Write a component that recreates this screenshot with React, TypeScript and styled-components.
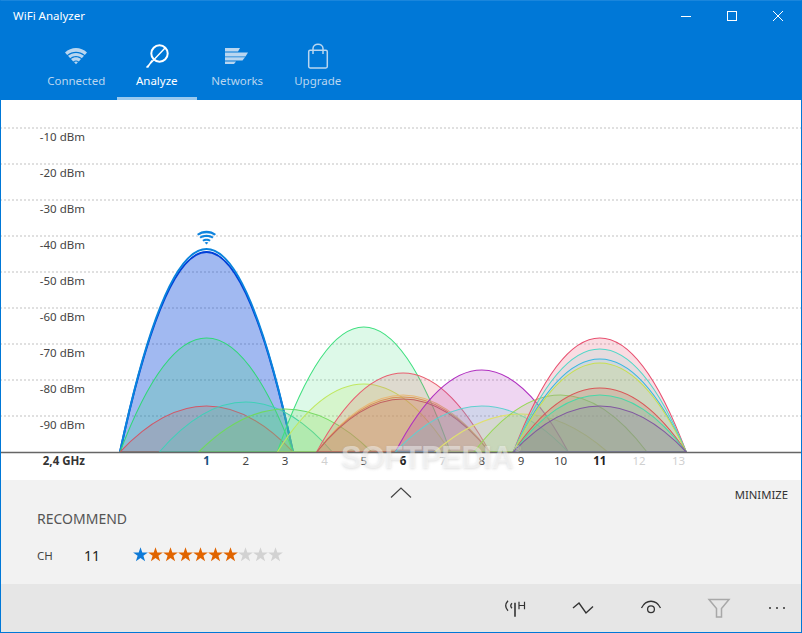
import * as React from "react";
import styled, { createGlobalStyle } from "styled-components";

const FONT = `"Noto Sans", "Open Sans", "Liberation Sans", sans-serif`;

const BASE_Y = 352;
const CHANNEL_STEP = 39.33;
const HALF_WIDTH = 86.5;

const channelX = (ch: number) => 206.5 + (ch - 1) * CHANNEL_STEP;

interface TCurve {
  ch: number;
  top: number;
  color: string;
  fill?: number;
  width?: number;
}

// top is given in page pixels, chart starts at y=100
const CURVES: TCurve[] = [
  { ch: 1, top: 252, color: "#0040d8", fill: 0.37, width: 2 },
  { ch: 1, top: 249, color: "#0a84dc", fill: 0, width: 2 },
  { ch: 1, top: 338, color: "#30d878", fill: 0.2 },
  { ch: 1, top: 406, color: "#d05868", fill: 0.2 },
  { ch: 2, top: 402, color: "#40d0b8", fill: 0.18 },
  { ch: 3, top: 409, color: "#70d860", fill: 0.2 },
  { ch: 5, top: 327, color: "#40e080", fill: 0.18 },
  { ch: 5, top: 384, color: "#c0e860", fill: 0.2 },
  { ch: 6, top: 373, color: "#e86070", fill: 0.2 },
  { ch: 6, top: 395, color: "#e8b878", fill: 0.2 },
  { ch: 6, top: 397, color: "#d89058", fill: 0.16 },
  { ch: 6, top: 399, color: "#c06060", fill: 0.16 },
  { ch: 8, top: 370, color: "#b030c0", fill: 0.2 },
  { ch: 8, top: 406, color: "#60d0d0", fill: 0.2 },
  { ch: 9, top: 414, color: "#e0e070", fill: 0.2 },
  { ch: 10, top: 395, color: "#98d858", fill: 0.2 },
  { ch: 11, top: 338, color: "#e85070", fill: 0.2 },
  { ch: 11, top: 349, color: "#50d8c8", fill: 0.12 },
  { ch: 11, top: 359, color: "#38b8e0", fill: 0.12 },
  { ch: 11, top: 363, color: "#c8e050", fill: 0.2 },
  { ch: 11, top: 388, color: "#d85858", fill: 0.2 },
  { ch: 11, top: 395, color: "#48d8a8", fill: 0.2 },
  { ch: 11, top: 406, color: "#8058a0", fill: 0.16 },
];

const LEVELS = [-10, -20, -30, -40, -50, -60, -70, -80, -90];

// 0 dim, 1 normal, 2 current, 3 connected
const CHANNELS: { n: number; tone: number }[] = [
  { n: 1, tone: 3 },
  { n: 2, tone: 1 },
  { n: 3, tone: 1 },
  { n: 4, tone: 0 },
  { n: 5, tone: 1 },
  { n: 6, tone: 2 },
  { n: 7, tone: 0 },
  { n: 8, tone: 1 },
  { n: 9, tone: 1 },
  { n: 10, tone: 1 },
  { n: 11, tone: 2 },
  { n: 12, tone: 0 },
  { n: 13, tone: 0 },
];

const TONE_COLOR = ["#d0d0d0", "#444444", "#222222", "#14507e"];

const GlobalStyle = createGlobalStyle`
  html, body {
    margin: 0;
    padding: 0;
    background: #fff;
    overflow: hidden;
  }
`;

const Window = styled.div`
  box-sizing: border-box;
  width: 802px;
  height: 633px;
  display: flex;
  flex-direction: column;
  border: 1px solid #0078d7;
  border-top-color: #1a86dc;
  font-family: ${FONT};
  color: #333;
`;

const Header = styled.header`
  background: #0078d7;
  height: 99px;
  display: flex;
  flex-direction: column;
  flex: none;
`;

const TitleBar = styled.div`
  height: 31px;
  display: flex;
  align-items: center;
  justify-content: space-between;
  padding-left: 12px;
`;

const Title = styled.span`
  color: #fff;
  font-size: 11.5px;
  margin-top: -2px;
`;

const WinButtons = styled.div`
  display: flex;
`;

const WinButton = styled.div`
  width: 46px;
  height: 31px;
  display: flex;
  align-items: center;
  justify-content: center;
  margin-top: -1px;
`;

const Tabs = styled.nav`
  flex: 1;
  display: flex;
  padding-left: 35px;
`;

const Tab = styled.div<{ $active?: boolean }>`
  box-sizing: border-box;
  width: 80.5px;
  height: 68px;
  display: flex;
  flex-direction: column;
  align-items: center;
  padding-top: 10px;
  color: ${(p) => (p.$active ? "#fff" : "#b9d6f0")};
  border-bottom: 3px solid ${(p) => (p.$active ? "#99c9ef" : "transparent")};
`;

const TabIcon = styled.svg`
  width: 28px;
  height: 28px;
  display: block;
`;

const TabLabel = styled.span`
  font-size: 11.5px;
  line-height: 16px;
  margin-top: 3px;
`;

const ChartArea = styled.section`
  position: relative;
  height: 380px;
  flex: none;
  background: #fff;
`;

const ChartSvg = styled.svg`
  display: block;
  width: 800px;
  height: 380px;
  font-family: ${FONT};
`;

const Watermark = styled.div`
  position: absolute;
  left: 340px;
  top: 340px;
  font-family: "Liberation Sans", sans-serif;
  font-weight: 700;
  font-size: 31px;
  letter-spacing: -0.6px;
  color: rgba(255, 255, 255, 0.45);
  text-shadow: 0 1px 3px rgba(150, 150, 150, 0.3);
  pointer-events: none;
`;

const WatermarkMark = styled.sup`
  font-size: 9px;
  font-weight: 400;
  vertical-align: 16px;
  margin-left: 1px;
`;

const Panel = styled.section`
  flex: 1;
  background: #f2f2f2;
  display: flex;
  flex-direction: column;
  padding: 0 13px 0 36px;
`;

const PanelTop = styled.div`
  height: 28px;
  display: grid;
  grid-template-columns: 1fr 40px 1fr;
  align-items: center;
  margin-left: -23px;
`;

const Chevron = styled.svg`
  width: 22px;
  height: 11px;
  display: block;
  justify-self: center;
  margin-top: -3px;
`;

const MinimizeText = styled.span`
  justify-self: end;
  font-size: 11.3px;
  color: #333;
  margin-top: 1px;
`;

const SectionTitle = styled.div`
  font-size: 14px;
  color: #555;
  line-height: 18px;
  margin-top: 2px;
`;

const RecommendRow = styled.div`
  display: flex;
  align-items: center;
  margin-top: 17px;
  height: 20px;
`;

const RowLabel = styled.span`
  width: 47px;
  font-size: 11.5px;
  color: #444;
`;

const RowValue = styled.span`
  width: 49px;
  font-size: 14px;
  color: #222;
`;

const Stars = styled.div`
  display: flex;
  margin-top: -2px;
`;

const StarIcon = styled.svg<{ $color: string }>`
  width: 15px;
  height: 15px;
  display: block;
  fill: ${(p) => p.$color};
`;

const Toolbar = styled.footer`
  height: 48px;
  flex: none;
  background: #e6e6e6;
  display: flex;
  justify-content: flex-end;
  align-items: center;
`;

const ToolButton = styled.div<{ $w: number }>`
  width: ${(p) => p.$w}px;
  height: 48px;
  display: flex;
  align-items: center;
  justify-content: center;
`;

const ToolIcon = styled.svg<{ $muted?: boolean }>`
  width: 24px;
  height: 24px;
  display: block;
  fill: none;
  stroke: ${(p) => (p.$muted ? "#a8a8a8" : "#333")};
  stroke-width: ${(p) => (p.$muted ? 1.5 : 1.3)};
`;

const curvePath = (c: TCurve) => {
  const cx = channelX(c.ch);
  const top = c.top - 100;
  const ctrl = BASE_Y - (BASE_Y - top) * 2;
  return `M${cx - HALF_WIDTH} ${BASE_Y} Q${cx} ${ctrl} ${cx + HALF_WIDTH} ${BASE_Y} Z`;
};

const WifiTab = () => (
  <TabIcon viewBox="0 0 28 28">
    <g fill="currentColor">
      <path d="M3 10.5 C9 4.5 19 4.5 25 10.5 L22.8 13 C17.6 8.6 10.4 8.6 5.2 13 Z" />
      <path d="M6 13.8 C10.6 9.9 17.4 9.9 22 13.8 L19.8 16.2 C16.4 13.4 11.6 13.4 8.2 16.2 Z" />
      <path d="M9 17 C12 14.8 16 14.8 19 17 L16.8 19.4 C15 18.2 13 18.2 11.2 19.4 Z" />
      <path d="M12 20 C13.2 19.3 14.8 19.3 16 20 L14 22.3 Z" />
    </g>
  </TabIcon>
);

const AnalyzeTab = () => (
  <TabIcon viewBox="0 0 28 28">
    <circle cx="16.5" cy="11.5" r="8.2" fill="none" stroke="currentColor" strokeWidth="2" />
    <path d="M22.5 5.5 L3.5 25.5 M9 18.5 L4.5 25.5" fill="none" stroke="currentColor" strokeWidth="1.4" />
  </TabIcon>
);

const NetworksTab = () => (
  <TabIcon viewBox="0 0 28 28">
    <g fill="currentColor">
      <path d="M2 6 H17 L15 9.6 H2 Z" />
      <path d="M2 10.6 H25 L22.5 14.4 H2 Z" />
      <path d="M2 15.2 H22 L19.5 18.6 H2 Z" />
      <path d="M2 19.4 H13 L11 22 H2 Z" />
    </g>
  </TabIcon>
);

const UpgradeTab = () => (
  <TabIcon viewBox="0 0 28 28">
    <g fill="none" stroke="currentColor" strokeWidth="1.5">
      <rect x="4.7" y="8.3" width="18.6" height="17.6" rx="1.4" />
      <path d="M9 12 V6.5 C9 0.8 19 0.8 19 6.5 V12" />
    </g>
  </TabIcon>
);

const Star = ({ color }: { color: string }) => (
  <StarIcon $color={color} viewBox="0 0 15 15">
    <polygon points="7.5,0.3 9.3,5.4 14.9,5.5 10.4,8.8 12.1,14.3 7.5,11 2.9,14.3 4.6,8.8 0.1,5.5 5.7,5.4" />
  </StarIcon>
);

const STAR_COLORS = [
  "#0f7ad6",
  "#e06400",
  "#e06400",
  "#e06400",
  "#e06400",
  "#e06400",
  "#e06400",
  "#d2d2d2",
  "#d2d2d2",
  "#d2d2d2",
];

const App: React.FC = () => {
  return (
    <>
      <GlobalStyle />
      <Window>
        <Header>
          <TitleBar>
            <Title>WiFi Analyzer</Title>
            <WinButtons>
              <WinButton>
                <svg width="10" height="10" viewBox="0 0 10 10">
                  <path d="M0 5.5 H10" stroke="#fff" strokeWidth="1" />
                </svg>
              </WinButton>
              <WinButton>
                <svg width="10" height="10" viewBox="0 0 10 10">
                  <rect x="0.5" y="0.5" width="9" height="9" fill="none" stroke="#fff" strokeWidth="1" />
                </svg>
              </WinButton>
              <WinButton>
                <svg width="10" height="10" viewBox="0 0 10 10">
                  <path d="M0 0 L10 10 M10 0 L0 10" stroke="#fff" strokeWidth="1" />
                </svg>
              </WinButton>
            </WinButtons>
          </TitleBar>
          <Tabs>
            <Tab>
              <WifiTab />
              <TabLabel>Connected</TabLabel>
            </Tab>
            <Tab $active>
              <AnalyzeTab />
              <TabLabel>Analyze</TabLabel>
            </Tab>
            <Tab>
              <NetworksTab />
              <TabLabel>Networks</TabLabel>
            </Tab>
            <Tab>
              <UpgradeTab />
              <TabLabel>Upgrade</TabLabel>
            </Tab>
          </Tabs>
        </Header>
        <ChartArea>
          <ChartSvg viewBox="1 0 800 380">
            {LEVELS.map((lv, i) => {
              const y = 28 + i * 36;
              return (
                <g key={lv}>
                  <path d={`M0 ${y} H802`} stroke="#e0e0e0" strokeWidth="2" strokeDasharray="2 2" />
                  <text x="85" y={y + 13} textAnchor="end" fontSize="11.5" fill="#444">
                    {lv} dBm
                  </text>
                </g>
              );
            })}
            {CURVES.map((c, i) => (
              <path
                key={i}
                d={curvePath(c)}
                fill={c.color}
                fillOpacity={c.fill}
                stroke={c.color}
                strokeWidth={c.width ?? 1.1}
              />
            ))}
            <path d={`M0 ${BASE_Y + 0.5} H802`} stroke="#666" strokeWidth="1.6" />
            <text x="85" y="365" textAnchor="end" fontSize="11.5" fontWeight="700" fill="#333">
              2,4 GHz
            </text>
            {CHANNELS.map((c) => (
              <text
                key={c.n}
                x={channelX(c.n)}
                y="365"
                textAnchor="middle"
                fontSize="11.5"
                fontWeight={c.tone >= 2 ? 700 : 400}
                fill={TONE_COLOR[c.tone]}
              >
                {c.n}
              </text>
            ))}
            <g fill="#0f84de">
              <path d="M197 134 C202 129.5 211 129.5 216 134 L214.7 135.6 C210.5 132.3 202.5 132.3 198.3 135.6 Z" />
              <path d="M199.5 137 C203 134 210 134 213.5 137 L212.2 138.5 C209.5 136.5 203.5 136.5 200.8 138.5 Z" />
              <path d="M202.3 140 C204.5 138.3 208.5 138.3 210.7 140 L209.5 141.4 C208 140.4 205 140.4 203.5 141.4 Z" />
              <path d="M204.6 142.6 C205.8 141.9 207.2 141.9 208.4 142.6 L206.5 144.6 Z" />
            </g>
          </ChartSvg>
          <Watermark>
            SOFTPEDIA<WatermarkMark>®</WatermarkMark>
          </Watermark>
        </ChartArea>
        <Panel>
          <PanelTop>
            <span />
            <Chevron viewBox="0 0 22 11">
              <path d="M1 10.5 L11 1 L21 10.5" fill="none" stroke="#444" strokeWidth="1.2" />
            </Chevron>
            <MinimizeText>MINIMIZE</MinimizeText>
          </PanelTop>
          <SectionTitle>RECOMMEND</SectionTitle>
          <RecommendRow>
            <RowLabel>CH</RowLabel>
            <RowValue>11</RowValue>
            <Stars>
              {STAR_COLORS.map((c, i) => (
                <Star key={i} color={c} />
              ))}
            </Stars>
          </RecommendRow>
        </Panel>
        <Toolbar>
          <ToolButton $w={68}>
            <ToolIcon viewBox="0 0 24 24">
              <path d="M5 4.7 C2 8 2 11.5 5 14.7 M9 7.3 C7.5 8.8 7.5 10.8 9 12.3" />
              <path d="M12 6.7 V20.7" strokeWidth="1.6" />
              <path d="M16 5.7 V13.3 M21.5 5.7 V13.3 M16 9.5 H21.5" strokeWidth="1.2" />
            </ToolIcon>
          </ToolButton>
          <ToolButton $w={68}>
            <ToolIcon viewBox="0 0 24 24">
              <path d="M2 12 L8 7 L15 17 L22 10.5" strokeWidth="1.4" />
            </ToolIcon>
          </ToolButton>
          <ToolButton $w={68}>
            <ToolIcon viewBox="0 0 24 24">
              <path d="M2.5 12 C7 3 17 3 21.5 12" />
              <circle cx="12" cy="13.3" r="3.4" />
            </ToolIcon>
          </ToolButton>
          <ToolButton $w={68}>
            <ToolIcon $muted viewBox="0 0 24 24">
              <path d="M2 3.5 H22 L14.5 12.5 V21 H9.5 V12.5 Z" />
            </ToolIcon>
          </ToolButton>
          <ToolButton $w={48}>
            <ToolIcon viewBox="0 0 24 24">
              <g fill="#333" stroke="none">
                <circle cx="5" cy="12" r="1" />
                <circle cx="12" cy="12" r="1" />
                <circle cx="19" cy="12" r="1" />
              </g>
            </ToolIcon>
          </ToolButton>
        </Toolbar>
      </Window>
    </>
  );
};

export default App;
